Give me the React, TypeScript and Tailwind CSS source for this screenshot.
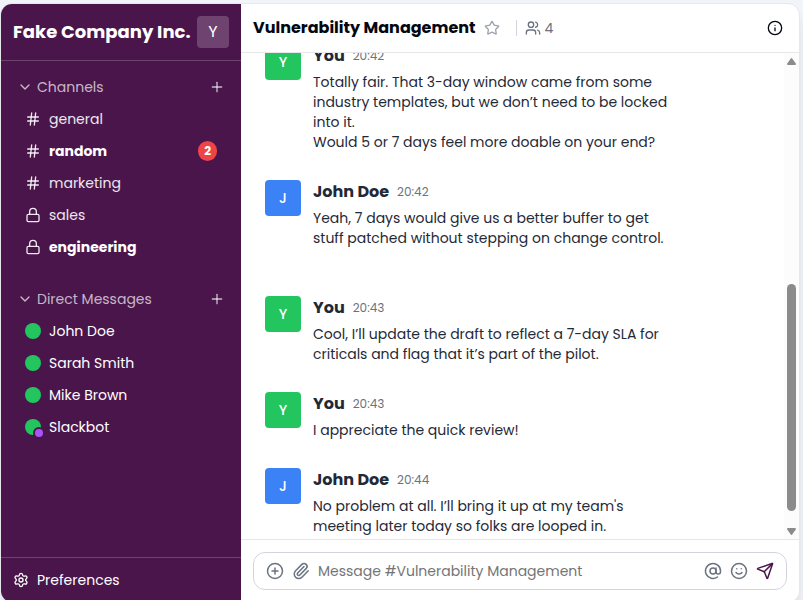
import React from "react";
import {
  AtSign,
  ChevronDown,
  CirclePlus,
  Hash,
  Info,
  Lock,
  Paperclip,
  Plus,
  Send,
  Settings,
  Smile,
  Star,
  Users,
} from "lucide-react";

type Channel = { name: string; locked?: boolean; bold?: boolean; unread?: number };
type Message = { author: string; time: string; lines: string[]; mine?: boolean; spaced?: boolean };

const channels: Channel[] = [
  { name: "general" },
  { name: "random", bold: true, unread: 2 },
  { name: "marketing" },
  { name: "sales", locked: true },
  { name: "engineering", locked: true, bold: true },
];

const people = [
  { name: "John Doe" },
  { name: "Sarah Smith" },
  { name: "Mike Brown" },
  { name: "Slackbot", bot: true },
];

const messages: Message[] = [
  {
    author: "You",
    time: "20:42",
    mine: true,
    lines: [
      "Totally fair. That 3-day window came from some",
      "industry templates, but we don’t need to be locked",
      "into it.",
      "Would 5 or 7 days feel more doable on your end?",
    ],
  },
  {
    author: "John Doe",
    time: "20:42",
    spaced: true,
    lines: [
      "Yeah, 7 days would give us a better buffer to get",
      "stuff patched without stepping on change control.",
    ],
  },
  {
    author: "You",
    time: "20:43",
    mine: true,
    lines: [
      "Cool, I’ll update the draft to reflect a 7-day SLA for",
      "criticals and flag that it’s part of the pilot.",
    ],
  },
  { author: "You", time: "20:43", mine: true, lines: ["I appreciate the quick review!"] },
  {
    author: "John Doe",
    time: "20:44",
    lines: [
      "No problem at all. I’ll bring it up at my team's",
      "meeting later today so folks are looped in.",
    ],
  },
];

function SectionHeader({ title }: { title: string }) {
  return (
    <div className="mb-1 flex h-6 items-center justify-between text-white/70">
      <button className="flex items-center gap-1 text-sm">
        <ChevronDown size={16} />
        {title}
      </button>
      <button aria-label={`Add to ${title}`}>
        <Plus size={16} />
      </button>
    </div>
  );
}

function ChannelRow({ channel }: { channel: Channel }) {
  const Icon = channel.locked ? Lock : Hash;
  return (
    <button className="flex h-8 w-full items-center gap-2 px-2 text-left text-sm text-white/90">
      <Icon size={16} className="shrink-0" />
      <span className={channel.bold ? "flex-1 font-bold text-white" : "flex-1"}>{channel.name}</span>
      {channel.unread && (
        <span className="flex h-5 items-center rounded-full bg-[#ef4444] px-1.5 text-xs font-bold text-white">
          {channel.unread}
        </span>
      )}
    </button>
  );
}

function Sidebar() {
  return (
    <aside className="flex w-60 shrink-0 flex-col bg-[#4a154b] text-white">
      <div className="flex h-[57px] shrink-0 items-center justify-between border-b border-white/20 px-3">
        <h1 className="whitespace-nowrap text-lg font-bold">Fake Company Inc.</h1>
        <button className="size-8 rounded bg-white/20 text-base">Y</button>
      </div>
      <nav className="flex-1 px-4 pt-3.5">
        <section className="mb-6">
          <SectionHeader title="Channels" />
          {channels.map((c) => (
            <ChannelRow key={c.name} channel={c} />
          ))}
        </section>
        <section>
          <SectionHeader title="Direct Messages" />
          {people.map((p) => (
            <button key={p.name} className="flex h-8 w-full items-center gap-2 px-2 text-left text-sm">
              <span className="relative size-4 rounded-full bg-[#22c55e]">
                {p.bot && (
                  <span className="absolute -right-1 -bottom-1 size-3 rounded-full border-2 border-[#4a154b] bg-[#a855f7]" />
                )}
              </span>
              {p.name}
            </button>
          ))}
        </section>
      </nav>
      <button className="flex h-[45px] shrink-0 items-center gap-2 border-t border-white/20 px-3 text-sm">
        <Settings size={16} />
        Preferences
      </button>
    </aside>
  );
}

function MessageRow({ message }: { message: Message }) {
  return (
    <article className={message.spaced ? "mb-12 flex gap-3 last:mb-0" : "mb-7 flex gap-3 last:mb-0"}>
      <div
        className={
          message.mine
            ? "flex size-9 shrink-0 items-center justify-center rounded bg-[#22c55e] text-sm font-medium text-white"
            : "flex size-9 shrink-0 items-center justify-center rounded bg-[#3b82f6] text-sm font-medium text-white"
        }
      >
        {message.author[0]}
      </div>
      <div className="text-[#1f2937]">
        <div className="mb-1 flex h-6 items-center gap-2">
          <span className="text-base font-bold">{message.author}</span>
          <time className="text-xs text-[#6b7280]">{message.time}</time>
        </div>
        <p className="whitespace-pre-line text-sm">{message.lines.join("\n")}</p>
      </div>
    </article>
  );
}

function ScrollBar() {
  return (
    <div aria-hidden="true" className="flex w-[15px] shrink-0 flex-col items-center bg-[#fcfcfc] py-1">
      <svg width="9" height="8" viewBox="0 0 9 8" fill="#8b8b8b">
        <path d="M3.8 1.4a.9.9 0 0 1 1.4 0L8.8 6.6A.9.9 0 0 1 8 8H1A.9.9 0 0 1 .2 6.6Z" />
      </svg>
      <div className="flex-1" />
      <div className="mb-4 h-[227px] w-[9px] rounded-full bg-[#8b8b8b]" />
      <svg width="9" height="8" viewBox="0 0 9 8" fill="#8b8b8b">
        <path d="M3.8 7.6a.9.9 0 0 0 1.4 0L8.8 2.4A.9.9 0 0 0 8 1H1A.9.9 0 0 0 .2 2.4Z" />
      </svg>
    </div>
  );
}

export default function App() {
  return (
    <div className="h-screen overflow-hidden bg-slate-100 pt-[3px] pr-[3px] font-[Poppins,Inter,sans-serif]">
      <div className="flex h-full min-h-screen overflow-hidden rounded-xl border border-[#e5e7eb] bg-white shadow-lg">
        <Sidebar />
        <main className="flex min-w-0 flex-1 flex-col">
          <header className="flex h-[49px] shrink-0 items-center border-b border-[#e5e7eb] px-3">
            <h2 className="text-base font-bold text-[#030712]">Vulnerability Management</h2>
            <button aria-label="Star channel" className="ml-2 text-[#9ca3af]">
              <Star size={16} />
            </button>
            <button className="ml-4 flex h-4 items-center gap-1 border-l border-[#d1d5db] pl-2 text-sm text-[#6b7280]">
              <Users size={16} />4
            </button>
            <button aria-label="Channel details" className="mr-1 ml-auto text-[#030712]">
              <Info size={16} />
            </button>
          </header>
          <div className="flex min-h-0 flex-1">
            <div className="flex min-w-0 flex-1 flex-col justify-end overflow-hidden px-6 pb-[3px]">
              {messages.map((m, i) => (
                <MessageRow key={i} message={m} />
              ))}
            </div>
            <ScrollBar />
          </div>
          <footer className="border-t border-[#e5e7eb] p-3">
            <div className="flex h-[38px] items-center gap-2 rounded-xl border border-[#d1d5db] px-3 text-[#6b7280]">
              <button aria-label="Add">
                <CirclePlus size={18} />
              </button>
              <button aria-label="Attach file">
                <Paperclip size={18} />
              </button>
              <input
                aria-label="Message"
                placeholder="Message #Vulnerability Management"
                className="min-w-0 flex-1 text-sm outline-none placeholder:text-[#757575]"
              />
              <button aria-label="Mention someone">
                <AtSign size={18} />
              </button>
              <button aria-label="Insert emoji">
                <Smile size={18} />
              </button>
              <button aria-label="Send message" className="text-[#4a154b]">
                <Send size={18} />
              </button>
            </div>
          </footer>
        </main>
      </div>
    </div>
  );
}
